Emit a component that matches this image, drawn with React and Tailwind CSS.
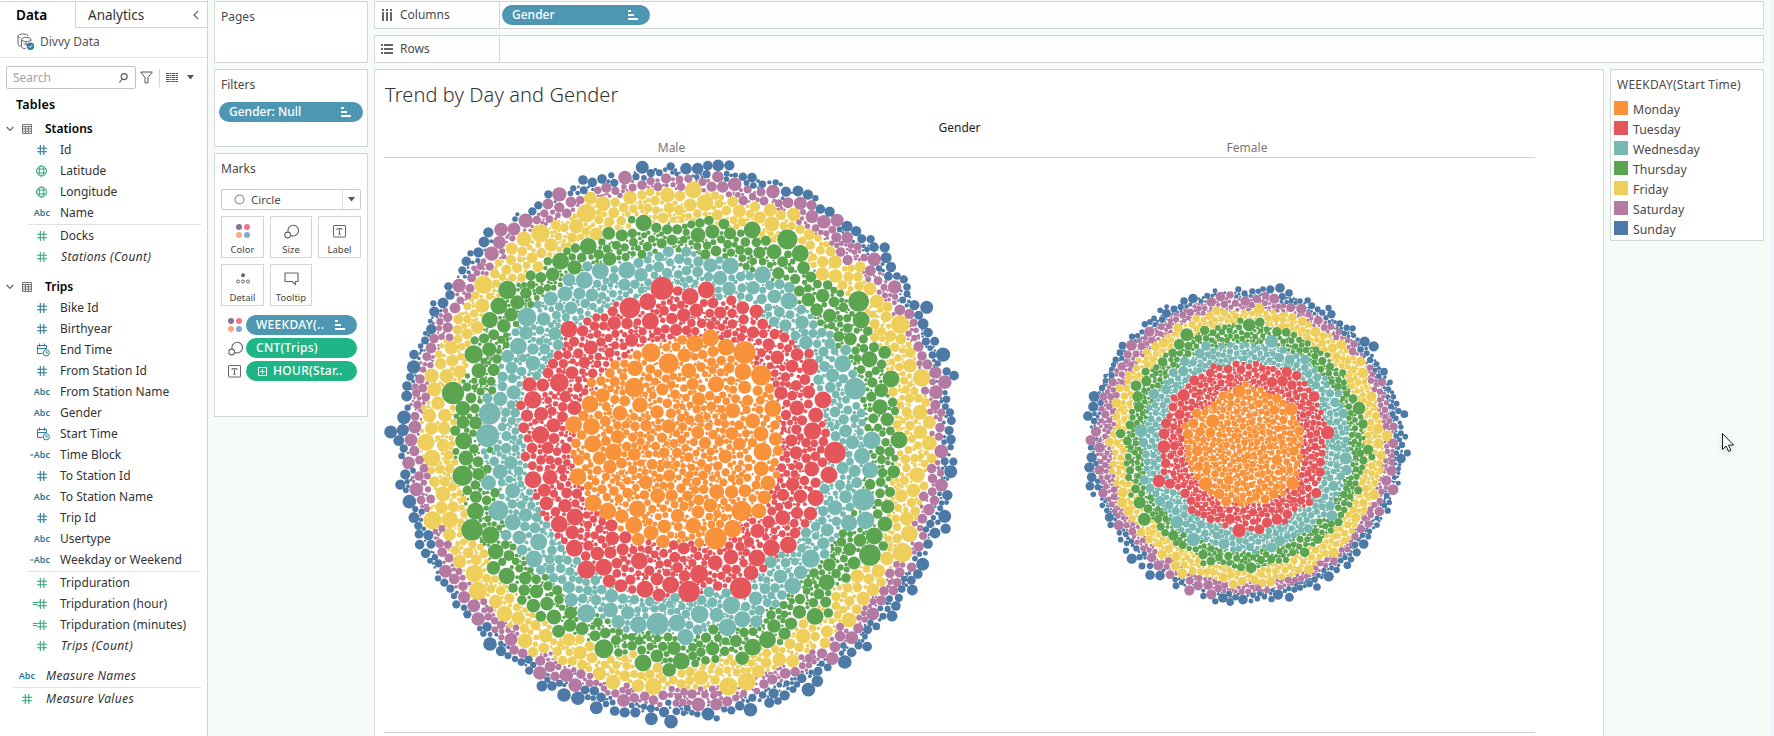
import React from "react";

const COLORS = {
  O: "#f8923b",
  R: "#e5565c",
  T: "#77b8b3",
  G: "#5ba551",
  Y: "#eecf5b",
  P: "#b47aa2",
  B: "#4c79a5",
};
const ORDER = ["O", "R", "T", "G", "Y", "P", "B"];

/* ---------- bubble data: "x y r" triples on a 3x grid, grouped by weekday ---------- */

const MALE_NW = {
  B: "787 52 19,872 49 12,918 56 16,955 56 16,609 90 14,637 97 14,666 87 14,694 76 9,580 115 9,505 133 12,475 166 12,457 184 12,412 193 6,405 207 8,325 247 15,312 276 16,295 307 15,272 310 9,259 334 14,247 361 12,205 409 12,210 435 14,189 459 16,160 460 9,163 485 15,151 514 7,154 538 15,148 572 11,122 588 8,102 614 14,101 651 20,81 708 14,80 738 16,107 700 13,83 773 9,72 803 20,34 847 19,68 840 18,812 70 12,838 68 10,890 72 7,703 100 12",
  P: "735 83 20,786 105 14,812 92 12,858 85 15,925 86 12,679 113 15,706 121 12,653 121 11,538 133 21,573 156 16,504 162 16,538 172 15,560 190 14,493 190 12,437 212 21,402 237 19,363 239 20,358 277 19,335 311 21,397 265 9,358 315 11,301 349 11,329 350 12,291 369 9,237 407 20,270 415 13,225 474 16,203 502 14,203 532 15,162 565 14,153 594 16,209 563 11,120 687 14,128 714 13,137 741 13,104 831 19,94 868 18",
  Y: "940 120 25,862 135 22,631 145 19,669 161 22,619 190 28,750 143 20,786 135 14,900 138 16,825 152 14,930 167 17,867 174 16,897 180 15,849 204 16,701 188 16,731 173 14,688 215 15,589 229 21,647 254 19,553 233 13,527 225 14,481 250 27,432 267 22,513 285 20,577 262 15,456 323 16,474 350 16,427 304 14,395 296 18,394 331 15,379 359 15,310 404 27,410 352 15,397 383 12,367 382 11,425 383 13,286 436 12,307 467 21,235 508 15,261 551 16,294 531 19,232 541 14,262 507 12,214 592 20,182 641 17,217 632 18,239 665 19,155 677 21,200 678 21,163 718 21,174 759 20,148 797 20,195 797 20,157 835 19,194 834 19,138 872 18,233 566 13,244 590 11",
  G: "791 219 24,686 250 19,726 256 18,626 289 25,588 294 14,756 251 14,829 233 15,862 238 15,954 255 22,891 238 15,876 270 16,911 269 11,687 326 20,656 312 15,542 334 25,583 352 21,518 373 20,605 323 14,802 290 14,760 276 13,734 292 12,737 321 12,786 313 13,845 280 15,382 420 27,357 468 25,412 457 21,438 429 17,453 377 15,481 382 16,453 405 13,480 421 13,328 511 24,394 494 20,372 527 20,341 554 16,408 522 9,284 571 12,312 565 15,281 613 27,328 598 21,297 663 22,341 660 18,351 627 14,219 729 33,273 744 16,249 777 22,308 756 14,261 711 13,283 692 9,333 694 13,336 722 12,308 692 12,254 818 19,287 818 19,226 838 15,250 872 24,284 776 14,544 265 0,755 209 11,815 267 11",
  T: "865 305 16,918 305 14,838 322 14,898 326 15,622 349 15,661 363 25,613 391 25,567 389 19,555 431 22,512 446 21,598 431 18,636 435 19,742 361 25,783 372 20,701 384 15,775 340 15,803 330 11,811 358 12,733 404 18,766 400 14,833 354 16,855 370 15,870 337 12,573 474 19,538 470 13,440 501 28,491 507 20,438 548 20,480 541 13,527 550 19,415 589 25,459 597 17,494 597 16,534 585 16,459 640 22,383 619 19,395 656 18,438 657 14,468 680 13,323 745 15,361 747 21,401 727 21,368 680 15,367 709 14,397 681 14,327 793 32,322 855 34,378 787 14,407 787 14,397 809 12,616 460 14,700 348 12,672 413 10,895 373 13,928 388 11",
  R: "845 415 34,930 440 25,803 454 25,751 474 31,811 514 25,893 423 14,910 498 19,877 505 17,945 482 18,890 540 18,917 541 14,565 538 25,608 543 17,698 484 15,650 502 12,622 514 12,672 503 12,702 521 20,742 516 17,645 528 14,670 527 13,582 575 15,634 592 21,665 575 14,684 564 12,700 552 12,755 571 19,690 606 15,703 589 12,705 621 13,535 616 14,561 614 13,519 641 15,504 669 16,576 668 19,538 698 28,613 637 17,638 670 14,449 703 21,488 705 19,458 749 26,583 775 21,556 740 17,534 735 14,484 792 21,441 797 18,421 769 14,522 825 21,515 784 13,552 774 14,431 833 16,482 856 25,594 712 14,546 800 16,788 544 12,772 470 0,655 620 11,595 690 10",
  O: "866 640 30,813 608 28,945 580 25,913 616 20,907 570 14,765 655 23,705 645 14,763 713 29,811 657 14,926 662 22,630 763 25,668 736 21,734 753 16,720 790 22,780 765 23,831 786 20,847 718 18,582 823 25,633 828 25,608 800 15,676 814 16,866 829 21,765 829 14,798 827 17,712 860 20,704 694 15,663 693 14,634 698 14,690 670 14,862 760 14,918 743 11,955 747 19,938 702 18,924 795 12,706 767 12,605 855 14,689 840 12,738 824 12,953 848 19,730 680 12",
};

const MALE_NE = {
  B: "18 56 17,53 56 17,84 47 14,114 47 17,148 46 15,140 71 8,216 83 14,268 97 6,287 97 9,302 103 6,318 125 15,354 123 16,382 136 15,406 145 9,421 177 14,447 185 15,502 230 16,526 243 15,545 266 13,572 268 12,582 291 14,614 292 15,618 323 16,633 351 15,597 355 9,651 378 11,671 388 12,625 379 13,681 411 11,681 432 10,740 472 19,703 466 15,715 496 13,729 521 16,744 548 14,764 574 13,788 614 21,761 615 11,800 664 12,822 677 14,796 770 10,810 788 12,814 811 13,817 853 10,732 590 11,668 450 10,794 830 8",
  P: "114 80 17,163 103 20,129 110 17,95 110 15,243 126 13,279 125 20,190 152 14,218 140 11,252 153 13,324 158 16,362 160 19,395 166 15,397 200 19,431 215 20,472 211 19,439 250 9,469 262 15,502 262 17,482 306 14,503 330 15,583 328 20,553 323 11,571 362 16,594 392 13,513 287 9,644 411 20,660 480 16,688 492 15,612 412 10,701 518 12,686 551 9,715 590 15,726 618 14,742 643 15,766 668 18,793 698 20,769 725 20,766 765 15,735 722 12,784 788 12,780 833 14,708 541 8,645 440 9,703 564 9,775 858 9",
  Y: "40 120 25,75 158 25,31 165 19,4 138 16,117 161 13,158 155 16,178 184 19,112 195 16,139 182 14,225 170 15,239 202 18,271 183 19,275 220 22,303 195 15,342 192 20,186 216 13,311 229 12,361 238 14,388 254 16,367 271 12,390 286 14,452 304 15,421 301 13,429 336 17,465 336 20,540 351 16,427 372 20,466 378 20,507 380 15,532 380 14,488 405 14,570 416 19,537 410 14,590 454 20,622 470 15,618 500 16,661 523 27,584 522 15,603 548 13,586 560 14,630 558 17,663 567 16,691 607 16,690 647 20,644 592 14,725 683 26,639 726 14,672 692 12,688 745 14,715 745 13,703 723 12,720 787 22,748 817 19,690 827 14,720 847 20,680 786 15,712 827 0,648 822 13,414 264 11,513 355 11,560 483 8,735 862 10",
  G: "54 255 22,97 244 21,132 222 16,34 223 12,60 219 14,87 213 14,150 250 18,217 241 25,238 307 18,282 305 22,322 268 30,361 310 25,196 276 14,229 275 14,257 272 15,108 303 16,76 313 15,371 354 19,308 335 16,295 370 18,345 387 15,333 359 10,394 380 16,412 402 13,358 423 16,428 437 20,443 405 14,386 450 20,462 456 16,536 454 31,481 430 11,409 478 19,449 497 20,490 472 14,544 511 25,511 567 19,476 559 16,563 542 14,531 540 9,568 628 24,614 607 19,582 590 15,527 603 12,605 643 14,532 624 12,633 687 25,543 659 13,604 721 20,577 697 15,567 674 11,638 757 14,600 771 23,623 809 20,645 783 12,574 740 15,657 870 25,594 833 12,631 843 13,248 335 11,180 300 14,143 283 13,518 584 9,153 308 12,270 345 9,550 750 9",
  T: "91 347 21,151 348 25,55 335 15,18 305 15,120 384 21,19 362 14,53 365 16,147 416 20,86 378 14,182 380 14,209 378 13,248 375 25,219 414 20,269 403 14,299 403 15,327 411 16,283 439 20,327 453 25,245 447 15,208 441 12,364 479 14,298 486 16,316 526 18,282 515 15,366 517 20,400 524 13,378 578 20,346 557 14,401 550 13,424 548 14,450 557 11,488 641 25,497 600 16,431 604 15,449 580 16,525 716 32,456 676 20,415 689 15,452 711 16,518 672 13,436 652 16,497 843 19,491 808 15,465 786 16,526 804 13,577 870 25,541 791 13,467 858 15,466 732 11,503 780 13,330 494 13,265 472 11,415 630 11,540 846 11,408 718 11",
  R: "79 420 25,30 440 25,10 495 20,49 481 20,99 459 16,154 451 15,188 473 19,229 484 20,121 488 18,156 490 14,191 508 15,157 522 14,219 547 18,248 523 16,190 538 12,250 550 13,284 552 15,313 562 15,266 583 18,292 622 20,324 595 12,351 614 19,387 611 14,245 608 13,336 648 19,391 650 25,316 681 14,303 729 20,374 689 16,386 726 19,290 706 13,349 706 16,429 750 25,351 774 22,407 795 22,385 762 13,318 795 15,366 811 15,349 838 15,397 844 26,437 849 13,334 863 13,125 563 8,20 530 14,45 545 12,65 520 14,92 530 13,268 650 10,275 690 13,320 760 11,4 465 12,125 532 11",
  O: "91 563 25,44 580 25,12 616 20,139 592 25,193 608 33,99 604 16,124 632 14,68 614 14,27 662 22,63 651 14,95 636 13,244 676 30,189 664 25,147 654 16,108 703 24,129 682 13,40 704 17,194 712 19,233 722 15,153 692 13,56 747 20,94 770 15,158 782 22,278 776 25,203 751 16,241 751 13,218 813 22,243 851 22,29 810 14,177 826 14,200 780 12,57 805 13,156 850 19,131 800 11,288 862 18,99 854 14,262 803 10,285 825 14,198 850 12,64 848 11,30 765 10,128 735 10,85 830 12,7 770 9,75 672 9,220 690 9",
};

const MALE_SW = {
  B: "55 14 16,71 40 12,76 118 15,61 149 15,88 200 20,102 248 16,118 295 13,119 329 14,137 355 14,150 377 8,144 300 15,153 328 13,159 315 10,175 385 12,174 430 9,193 443 12,211 461 12,222 483 9,229 508 12,252 518 9,262 538 12,302 580 8,310 596 9,320 576 14,330 627 20,363 648 15,384 662 10,405 672 9,426 680 11,448 706 12,444 673 12,458 690 9,486 753 16,516 753 14,552 780 20,594 789 20,538 745 10,502 734 9,615 765 13,643 768 14,649 818 19,663 787 14,678 807 9,704 828 14,734 832 15,766 832 15,813 822 12,814 850 19,873 860 20,852 831 15,889 829 11,865 803 9,115 275 12,130 262 9,125 230 9,98 105 8,345 650 8,792 815 9,620 745 9",
  P: "93 15 19,103 48 15,86 84 19,119 75 13,132 100 13,117 123 14,109 163 20,123 195 13,142 123 10,144 163 9,152 192 13,180 328 13,186 350 14,187 280 10,207 369 13,197 409 19,222 431 16,203 327 12,237 408 10,249 454 14,254 485 18,282 510 19,295 552 20,311 500 10,323 546 11,363 570 12,345 584 10,393 613 19,364 607 9,402 645 14,429 656 14,408 578 9,480 714 20,481 677 15,510 695 16,512 656 6,559 721 20,526 724 14,585 750 20,603 716 14,630 723 9,630 745 11,646 742 9,673 762 9,682 772 8,706 775 12,731 796 19,762 789 14,794 784 14,820 796 14,850 781 14,740 752 9,875 762 9,888 805 10,715 755 8,870 780 8",
  Y: "138 22 25,190 31 19,156 70 25,219 25 9,207 60 14,180 102 14,211 102 14,225 82 10,164 140 16,194 140 15,217 155 13,189 177 22,185 217 19,219 216 16,158 256 27,209 255 25,250 193 10,257 220 12,208 298 19,226 346 14,267 350 16,239 380 20,291 376 16,284 416 26,292 467 27,275 325 12,251 320 10,320 388 14,310 358 13,320 430 13,362 467 14,347 500 20,345 432 11,388 490 15,386 466 13,375 537 23,413 549 20,410 517 11,433 580 14,435 617 22,497 602 20,459 651 15,491 639 16,468 568 15,460 540 9,567 614 19,600 654 20,599 613 14,532 649 14,548 677 14,636 668 16,577 678 14,606 690 15,659 715 20,629 634 15,699 741 22,734 722 16,774 752 19,820 754 25,709 690 12,740 692 12,673 692 12,690 672 11,759 658 12,835 698 15,810 719 14,882 735 13,784 722 11,520 620 10,303 340 10,735 672 11,862 722 9,856 685 9",
  G: "250 17 25,258 69 22,247 122 30,282 42 14,294 80 16,330 45 9,227 50 10,296 117 18,263 167 14,286 150 14,320 103 13,287 187 18,286 229 25,320 196 14,344 172 14,276 285 32,332 300 26,292 263 11,325 250 10,345 350 23,386 363 16,341 398 20,380 423 24,367 380 12,399 336 10,376 326 13,357 329 10,406 378 11,418 400 12,436 431 19,399 459 14,434 464 17,468 469 20,468 433 14,426 494 14,460 512 20,501 506 20,498 427 10,504 453 14,532 466 15,537 493 14,480 546 16,522 546 22,546 518 9,572 532 19,571 570 19,537 588 19,604 580 19,645 602 16,676 594 16,654 562 14,672 642 28,709 612 15,692 570 15,757 631 14,715 588 11,789 684 25,831 662 19,867 705 20,882 640 20,849 636 14,776 618 13,785 645 13,811 635 11,864 606 13,896 680 15,735 605 9,737 632 8,833 606 11,885 595 9,310 320 9,485 488 9",
  T: "320 0 34,379 40 16,343 80 14,329 90 14,360 110 22,393 84 20,415 107 14,405 40 12,326 144 22,398 167 22,365 143 11,432 68 11,388 133 11,355 227 30,397 207 14,398 262 24,437 240 20,424 210 13,418 307 20,378 302 16,438 275 14,476 321 25,462 278 16,469 247 14,454 212 12,426 345 16,462 372 25,482 404 14,516 346 14,509 373 14,543 340 11,500 270 11,522 429 14,510 402 14,542 400 14,537 374 13,567 458 18,573 494 20,545 435 13,570 410 13,562 376 13,608 491 14,598 463 11,622 463 14,619 535 27,598 433 11,593 380 12,648 495 16,665 464 14,695 483 20,692 525 22,645 435 14,617 440 11,716 560 20,741 535 20,777 569 25,834 567 33,888 566 25,809 500 14,763 494 14,728 491 15,739 583 10,773 524 10,795 524 9,848 517 13,885 489 14,868 507 11,825 521 11,492 298 10,432 100 9,668 440 10,853 540 9,873 530 10,890 528 9,580 435 10,380 112 9",
  R: "482 0 26,456 39 16,436 65 14,459 134 25,483 75 14,457 92 13,503 38 18,520 10 16,510 127 22,510 75 13,493 166 19,558 40 16,546 103 14,550 128 11,560 84 11,499 205 20,556 212 20,561 174 16,590 176 15,527 230 14,585 246 25,538 268 25,577 292 20,582 206 12,620 240 11,533 302 9,624 270 12,553 317 10,583 340 25,625 332 15,624 300 9,648 298 12,652 355 20,691 353 18,617 365 14,697 310 20,694 270 18,736 307 18,728 343 18,657 282 12,665 265 11,662 312 12,620 405 27,670 398 25,711 384 16,689 437 19,721 451 19,735 400 11,778 378 25,751 434 15,760 345 12,795 463 25,831 432 19,837 480 19,872 450 25,808 407 15,840 388 12,851 355 13,862 384 12,885 367 16,880 330 14,895 400 16,785 325 9,805 345 12,860 413 11,600 160 8,605 192 8,640 370 9,730 372 9,775 415 9,897 470 15",
  O: "638 27 25,588 25 14,700 53 25,595 75 16,659 69 20,690 94 20,740 35 14,763 58 19,594 125 25,652 106 13,678 125 12,724 84 16,625 153 13,666 163 14,702 168 14,816 88 16,852 53 16,868 122 18,797 142 20,833 182 22,640 205 25,685 230 25,743 174 16,772 222 25,724 244 20,760 270 25,813 293 22,737 208 9,853 274 20,850 320 20,774 311 19,808 260 10,793 180 14,826 154 15,712 8 18,758 105 14,783 84 11,875 181 18,846 8 15,742 137 12,893 242 20,817 222 12,665 42 0,782 20 12,812 10 11,890 88 10,795 112 10,712 128 10,647 140 11,835 245 10,872 300 10,615 100 10,726 60 10,850 220 11",
};

const MALE_SE = {
  B: "813 14 14,812 35 9,820 80 12,812 110 19,779 75 13,802 181 15,794 244 19,797 281 15,765 294 16,750 268 12,744 327 14,738 281 9,728 388 19,712 418 14,736 355 7,693 434 13,697 465 16,673 428 9,656 490 12,648 512 14,625 492 10,636 543 16,623 522 9,571 565 9,560 583 13,569 595 9,561 635 14,536 631 12,515 652 14,494 681 20,463 685 9,444 696 11,414 709 13,425 686 9,411 739 17,386 763 20,352 747 9,363 730 14,314 781 15,281 775 15,294 798 11,268 803 15,248 780 11,211 824 20,180 813 14,154 826 12,133 823 9,84 837 19,110 850 9,36 833 8,340 762 10,320 745 9,52 838 9,22 820 10,555 605 8,800 200 7",
  P: "784 49 20,777 5 12,755 101 14,784 150 19,758 131 14,731 184 14,757 171 13,763 196 14,747 224 17,715 242 9,716 335 15,705 310 10,722 280 9,695 397 14,640 467 14,610 468 14,634 415 14,656 414 15,605 495 15,578 537 19,581 500 10,536 582 15,514 607 19,483 604 16,465 635 16,457 671 19,481 575 12,426 655 15,407 650 14,386 670 12,367 692 10,345 711 14,317 715 16,302 700 12,277 733 15,252 747 14,228 750 10,142 799 15,167 789 10,109 808 18,55 808 20,36 777 14,75 779 11,97 762 10,102 782 10,191 775 10,207 769 8,387 690 9,12 770 11,62 762 8,740 205 9,118 775 8",
  Y: "748 24 22,755 70 15,720 15 14,698 10 12,711 120 23,735 65 13,704 70 13,676 73 14,694 98 12,732 153 13,664 182 19,700 166 20,695 204 14,705 228 14,680 251 20,688 296 25,655 243 14,651 276 12,652 310 14,667 353 29,620 370 20,625 312 11,595 408 20,566 432 16,603 443 14,580 464 19,532 424 20,550 490 20,530 523 15,508 498 15,532 458 14,502 460 14,507 555 22,470 484 14,468 513 13,473 540 12,441 589 18,435 624 16,369 605 22,405 605 14,370 567 14,330 626 16,358 634 14,338 679 19,298 674 20,400 634 9,258 683 16,235 709 19,200 740 27,145 754 27,170 712 12,105 735 14,62 728 22,30 710 14,28 737 13,117 710 13,142 705 11,212 683 11,285 640 12,260 655 13,5 745 14,140 680 9,5 712 12,425 565 9,398 575 11,650 42 10,660 55 9,150 668 9,305 645 9,490 478 10",
  G: "657 17 25,625 50 15,604 69 13,600 45 14,641 110 19,603 113 14,643 68 10,570 148 16,602 141 14,630 171 15,623 215 20,593 237 14,600 175 14,615 267 22,583 303 25,570 360 32,610 333 14,540 316 19,508 342 19,487 318 14,522 384 19,448 389 19,440 442 24,498 429 14,469 415 14,417 477 16,384 444 14,437 501 16,405 545 25,445 534 14,400 503 14,358 531 20,360 492 15,402 414 14,282 573 20,333 566 18,314 596 18,263 615 25,218 637 25,187 670 20,168 618 18,273 540 14,98 641 20,5 678 25,134 649 14,61 652 14,78 608 15,114 609 12,100 583 15,148 628 9,34 657 13,193 592 14,218 590 13,34 635 13,483 350 0,455 370 10,475 345 10,335 500 9,480 400 9,490 297 12,265 562 9,313 538 11,300 621 9,331 515 9,55 628 10,380 467 11,510 295 9",
  T: "577 18 26,517 22 20,546 63 24,572 106 24,488 99 18,524 108 18,467 8 13,550 194 33,557 256 26,497 185 19,530 143 16,480 150 15,465 218 22,434 162 15,505 265 24,510 216 13,442 285 19,500 0 11,430 325 18,392 371 27,407 275 14,474 260 14,378 293 15,508 157 11,434 357 14,407 303 11,362 412 20,338 453 25,365 340 13,345 380 11,272 381 18,301 424 20,255 461 16,285 459 14,227 490 20,306 480 14,270 415 9,322 415 9,154 511 26,110 540 21,187 553 24,142 577 26,197 515 14,239 526 15,229 559 18,59 538 26,17 607 24,87 471 16,97 502 15,139 474 14,53 584 15,65 495 14,40 514 12,262 503 13,287 506 12,225 455 9,100 570 0,305 360 10,410 330 10,418 190 13,385 318 10,260 435 10,18 495 12,457 120 10,85 575 13,125 505 12",
  R: "465 53 32,447 120 25,334 16 18,348 53 19,380 20 14,395 102 22,408 66 14,407 189 24,407 143 15,338 148 20,373 137 14,391 236 20,361 184 20,309 180 18,425 80 14,380 70 14,430 20 14,351 234 18,308 248 22,266 261 19,336 185 12,345 294 16,325 330 25,307 296 10,274 339 25,233 288 21,282 287 10,231 369 25,213 413 22,207 321 15,182 459 32,153 366 22,105 383 22,178 303 12,57 417 27,27 470 32,167 404 14,113 453 14,10 340 18,140 404 14,8 372 10,53 362 13,145 434 9,180 335 14,83 368 9,276 228 13,297 217 12,305 98 13,335 95 10,307 70 8,88 437 10,218 258 10,12 420 17,126 420 12,120 350 9,300 135 9,290 205 0,255 305 10,240 330 9,325 210 12,400 5 15,320 115 10,42 345 10",
  O: "248 50 27,287 12 20,294 47 15,136 64 20,178 27 19,244 101 22,206 97 11,75 24 18,185 228 30,264 144 22,236 228 22,253 187 20,195 167 19,155 171 20,110 170 22,107 310 33,158 281 26,40 272 23,91 211 20,54 231 19,58 323 14,71 163 14,69 121 14,113 93 14,95 271 11,138 260 10,57 195 16,23 183 16,10 240 18,228 150 13,26 67 14,130 142 12,118 20 14,175 100 11,205 70 11,218 190 12,88 245 11,112 237 12,42 20 12,92 50 12,137 112 12,35 98 11,155 130 11,202 128 12,3 160 14,180 60 10,245 10 16,97 130 10,132 200 11,5 300 12,48 55 10,8 110 10,160 200 8,290 120 11",
};

const FEMALE = {
  B: "630 54 14,601 58 12,657 69 11,505 58 9,579 57 8,547 64 9,435 62 7,470 68 8,369 86 14,342 93 11,312 117 10,289 130 13,271 121 8,250 147 8,240 155 8,290 110 7,226 162 9,186 200 9,158 227 11,150 248 10,137 269 9,125 318 9,106 318 6,73 380 16,70 409 15,54 438 14,72 453 9,82 472 8,72 432 7,65 562 15,58 592 15,65 622 14,60 648 13,70 673 8,97 706 8,118 742 13,122 765 9,152 809 8,148 787 8,170 820 8,186 866 15,168 842 9,207 862 9,216 888 10,240 915 14,240 888 9,270 917 14,318 947 10,400 978 9,436 994 9,459 984 14,480 996 11,519 989 14,497 982 9,543 993 7,562 986 8,605 987 9,624 974 15,658 982 13,583 980 8,741 951 11,776 919 15,800 900 9,832 886 11,843 868 9,860 847 12,881 822 14,895 800 8,921 765 8,921 745 7,953 722 9,985 640 7,984 597 7,993 566 14,1012 549 10,996 525 9,1006 500 8,986 512 9,980 401 8,1002 432 11,987 424 9,966 367 6,960 337 8,942 305 11,930 298 8,920 282 8,911 229 15,884 215 15,848 175 9,830 173 9,784 132 12,776 115 9,713 91 9,725 107 10,757 128 9,690 93 8,636 80 10,808 175 8,978 445 8,953 380 7",
  P: "451 80 14,480 75 11,424 96 14,587 77 11,613 86 15,561 87 12,527 94 14,463 103 11,496 100 10,662 113 13,694 116 15,585 100 8,544 104 9,361 127 11,338 136 10,387 115 8,318 148 9,238 185 15,184 226 16,214 229 11,297 168 9,274 170 10,173 254 12,198 252 10,155 289 12,128 335 12,155 313 9,183 283 9,99 380 12,106 433 12,120 408 10,78 485 15,62 510 15,89 533 15,110 506 9,88 600 14,112 622 9,104 563 8,99 669 14,132 680 10,108 650 8,146 766 15,170 766 9,187 785 11,245 863 14,265 886 15,300 914 13,359 932 12,358 961 15,384 947 14,414 945 14,424 973 15,445 955 12,465 947 9,290 890 9,220 835 9,515 965 9,535 965 9,565 955 9,655 930 10,675 930 9,792 873 11,750 880 9,832 838 9,855 800 11,873 777 12,895 762 11,884 745 9,903 735 9,928 725 14,905 690 10,969 659 16,949 632 15,965 602 15,970 520 14,971 470 12,945 495 0,936 336 12,930 365 9,920 335 9,900 293 9,932 405 8,848 245 11,852 222 11,806 186 9,745 151 13,780 170 10,765 172 10,716 133 9,833 212 8,930 570 9,935 665 9,946 440 8,715 905 9,335 905 8",
  Y: "567 116 16,440 122 13,418 138 12,463 128 11,497 138 10,378 146 11,402 148 9,667 142 12,697 154 14,660 155 9,637 150 10,617 145 12,598 145 10,588 168 0,547 130 8,324 174 14,350 175 10,281 218 15,302 210 9,257 230 13,230 246 11,206 271 8,258 250 9,232 285 10,200 295 10,175 315 10,174 333 10,150 355 11,168 355 10,138 400 14,163 378 11,152 415 8,139 440 12,146 470 9,130 492 9,119 516 13,138 518 10,136 548 9,152 563 9,130 583 10,125 603 9,147 608 8,139 640 10,143 627 8,158 670 15,157 696 15,175 722 15,186 745 11,205 752 10,213 787 13,238 808 12,218 765 10,247 788 9,278 852 14,268 822 10,294 838 12,318 862 14,316 886 14,343 885 10,337 910 15,368 903 12,393 905 10,410 905 10,430 908 9,460 922 14,490 943 13,516 934 13,483 915 10,554 930 13,580 938 12,601 935 14,547 912 9,575 915 9,635 920 10,645 900 10,660 890 8,686 900 11,716 898 15,700 875 9,725 862 10,737 840 11,790 848 15,768 850 10,797 798 10,798 823 9,823 812 10,824 790 10,833 765 10,857 743 14,835 735 9,850 720 11,857 697 9,880 698 12,912 674 15,887 655 11,878 635 9,914 640 10,905 610 9,890 605 9,934 556 14,905 587 10,926 520 15,951 497 16,924 476 16,902 457 10,918 438 12,904 380 15,897 400 9,872 275 14,879 309 16,865 337 9,850 300 10,840 330 10,835 272 10,812 225 15,788 234 14,800 258 11,815 262 10,833 247 10,738 187 15,757 200 11,720 185 11,713 203 9,758 218 11,768 235 9,637 168 9,840 275 0,865 722 7,775 215 7,815 288 8,845 350 9,850 262 8,888 350 7,740 208 8",
  G: "538 165 19,569 157 14,404 181 14,350 194 19,429 188 10,456 186 9,479 182 9,511 152 9,507 172 9,328 223 16,355 228 12,385 205 11,308 249 13,295 258 9,278 276 14,330 250 9,259 292 9,227 304 12,229 333 15,248 330 9,198 347 16,203 380 16,191 402 9,207 410 15,190 418 10,218 430 8,180 465 13,209 475 9,151 490 14,172 513 13,188 495 8,198 520 9,175 560 10,195 548 9,205 560 9,170 580 9,180 602 12,205 595 9,176 621 10,198 633 8,198 658 13,212 670 10,209 697 18,183 675 8,234 716 13,223 748 19,264 747 12,248 732 8,272 770 12,285 788 11,310 797 15,340 793 9,318 818 9,338 825 12,333 810 10,377 838 9,399 854 14,423 873 13,400 880 9,447 862 11,475 858 12,470 830 9,500 865 10,513 892 12,543 893 16,550 860 9,573 870 12,603 867 12,590 855 9,627 872 9,648 870 9,650 860 8,668 848 10,704 847 14,688 830 9,690 808 10,712 808 9,743 807 14,735 785 10,767 768 9,748 755 9,783 760 10,805 756 12,800 738 8,823 720 9,824 700 9,838 705 8,840 680 9,822 672 11,828 657 9,840 640 9,865 661 12,855 640 9,860 620 9,858 598 9,880 570 12,875 550 11,905 560 10,893 540 15,867 523 8,865 497 9,879 462 14,855 450 8,867 415 19,849 386 13,830 372 10,840 342 10,805 350 10,805 330 9,818 308 10,780 290 12,777 310 9,757 273 12,738 240 10,735 258 10,772 255 8,708 240 9,713 220 9,648 186 13,620 187 14,590 178 9,672 195 9,695 225 8,555 200 8,500 200 8,425 210 8,785 335 9,855 475 9",
  T: "605 213 19,628 263 14,659 269 15,705 270 14,640 240 11,408 228 14,389 250 15,430 243 9,455 228 9,480 225 9,345 276 14,340 303 15,367 278 11,310 308 13,288 359 14,252 372 16,318 345 9,240 340 0,255 405 9,238 413 9,257 428 9,243 447 10,257 463 9,215 482 19,240 480 11,220 518 14,246 512 9,228 553 11,250 555 9,232 575 10,252 580 9,223 630 14,240 654 13,245 633 9,270 693 15,258 672 10,297 705 13,322 757 19,300 690 9,317 723 12,343 735 10,370 808 20,348 762 10,365 770 11,393 763 12,335 780 8,405 790 11,440 797 11,462 822 16,437 818 9,490 800 9,509 812 10,540 832 12,526 815 9,552 847 8,565 815 9,605 832 15,630 812 16,590 800 9,650 800 10,665 775 9,693 780 9,715 776 13,710 750 9,738 755 8,740 725 9,757 710 10,786 738 16,780 708 14,765 680 10,790 648 15,770 660 9,805 625 10,830 600 15,812 620 12,827 565 18,800 560 9,805 535 10,832 540 8,828 510 10,800 500 9,830 475 9,820 431 14,800 455 10,780 430 9,795 397 14,805 370 11,780 370 12,755 358 9,770 345 9,765 325 8,742 322 12,737 345 12,715 312 11,705 292 11,720 335 9,590 230 9,680 285 9,570 250 8,530 225 8,500 250 8,460 255 8,785 470 9,800 587 9,795 480 8,700 300 0,360 750 8,275 380 8",
  R: "498 282 10,513 299 13,474 297 13,430 289 9,421 309 13,558 282 9,537 290 9,536 312 9,577 295 10,609 297 9,650 306 15,680 317 14,605 335 16,636 333 16,585 325 12,480 323 12,449 318 9,453 338 10,373 331 15,395 320 9,420 330 9,391 345 9,666 345 14,706 340 9,690 358 9,732 380 16,703 378 10,719 398 9,341 376 18,312 383 10,333 400 9,309 411 13,329 433 15,345 415 9,289 460 15,282 491 16,298 440 9,310 470 10,282 530 19,312 528 13,337 505 9,310 500 9,287 580 14,302 558 10,282 605 10,267 633 19,300 641 15,310 610 9,323 590 8,332 620 9,325 650 9,345 670 14,363 692 13,365 720 12,340 645 9,382 705 9,383 730 9,402 735 10,395 715 9,422 747 12,430 725 9,450 720 10,444 748 9,455 735 9,480 747 15,507 782 20,467 765 9,478 720 10,502 745 9,525 762 9,549 755 9,568 778 15,591 758 15,549 727 12,575 732 9,520 722 9,621 748 16,605 720 9,652 733 14,640 720 9,627 705 9,645 755 9,672 690 9,693 692 12,718 697 11,710 710 9,675 660 9,690 645 9,715 655 10,739 669 15,725 625 9,735 640 9,750 606 14,735 590 10,714 610 10,695 615 9,751 577 13,724 560 9,705 580 9,757 550 10,735 530 11,700 545 9,773 488 20,740 490 10,720 495 10,755 515 9,710 465 9,730 458 9,745 440 9,752 428 8,700 435 9,715 430 9,692 410 9,725 415 9,560 315 8,480 340 8",
  O: "507 364 19,527 343 9,486 343 8,458 378 12,481 380 11,482 400 10,535 365 9,551 358 8,428 453 20,380 430 14,405 427 10,432 405 9,370 460 15,345 468 11,353 493 15,390 485 14,421 488 15,425 435 0,382 543 16,355 533 9,408 545 8,428 525 9,420 540 9,375 565 9,386 590 14,407 642 20,410 603 12,383 620 10,435 612 11,437 585 9,447 672 16,425 665 9,468 693 15,484 675 9,476 630 14,450 635 9,500 660 9,520 640 9,541 690 10,557 680 12,585 687 13,610 688 10,565 660 9,611 672 14,640 670 9,620 650 10,668 640 19,640 625 9,621 570 16,650 575 10,660 600 10,680 610 8,672 543 14,643 545 9,688 483 14,660 490 9,672 510 9,630 500 9,663 418 19,640 425 9,613 420 14,620 385 14,600 380 8,583 393 9,568 400 12,540 385 9,640 450 12,610 455 9,590 430 9,575 425 9,640 400 10,520 400 9,545 410 9,500 425 9,460 420 9,450 480 0,455 440 9,680 460 9,682 580 9,595 605 8,570 635 9,545 645 9,510 700 8,500 690 10,360 510 8,400 510 9,365 485 0,455 560 9,480 585 8,600 530 9,430 640 9",
};

/* Outer radius of every weekday band at E, SE, S, SW, W, NW, N, NE. */
const MALE_BANDS = [
  [106, 107, 99, 102, 100, 92, 104, 114],
  [154, 155, 154, 149, 147, 150, 150, 156],
  [195, 186, 191, 185, 190, 195, 191, 188],
  [222, 217, 223, 217, 218, 222, 220, 225],
  [259, 249, 246, 245, 253, 251, 253, 253],
  [271, 264, 263, 260, 265, 265, 266, 270],
  [279, 274, 271, 267, 273, 272, 275, 279],
];
const FEMALE_BANDS = [
  [170, 185, 180, 178, 180, 158, 175, 168],
  [240, 257, 255, 243, 250, 248, 243, 256],
  [312, 322, 320, 312, 307, 303, 303, 308],
  [358, 366, 370, 357, 355, 358, 362, 358],
  [415, 420, 417, 408, 397, 402, 402, 415],
  [450, 440, 447, 440, 445, 444, 440, 440],
  [472, 462, 466, 456, 466, 460, 460, 462],
].map((b) => b.map((r) => r / 3));

function rng(seed) {
  let s = seed;
  return () => {
    s = (s + 0x6d2b79f5) | 0;
    let t = Math.imul(s ^ (s >>> 15), 1 | s);
    t = (t + Math.imul(t ^ (t >>> 7), 61 | t)) ^ t;
    return ((t ^ (t >>> 14)) >>> 0) / 4294967296;
  };
}

/* Nudges overlapping bubbles apart; the larger one of a pair moves less. */
function relax(list) {
  list.sort((a, b) => a.x - b.x);
  for (let pass = 0; pass < 14; pass++) {
    for (let i = 0; i < list.length; i++) {
      const a = list[i];
      for (let j = i + 1; j < list.length; j++) {
        const b = list[j];
        const dx = b.x - a.x;
        if (dx > 26) break;
        const dy = b.y - a.y;
        const d = Math.hypot(dx, dy) || 0.01;
        const over = a.r + b.r - d;
        if (over <= 0) continue;
        const wa = (b.r * b.r) / (a.r * a.r + b.r * b.r);
        a.x -= (dx / d) * over * wa;
        a.y -= (dy / d) * over * wa;
        b.x += (dx / d) * over * (1 - wa);
        b.y += (dy / d) * over * (1 - wa);
      }
    }
  }
}

/* Places the listed bubbles, then packs progressively smaller ones between them. */
function pack({ groups, bands, cx, cy, scale, seed }) {
  const rand = rng(seed);
  const CELL = 12;
  const grid = new Map();
  const out = [];
  const gapAt = (x, y) => {
    let g = 99;
    const gx = Math.floor(x / CELL);
    const gy = Math.floor(y / CELL);
    for (let i = -2; i <= 2; i++)
      for (let j = -2; j <= 2; j++) {
        const cell = grid.get((gx + i) * 4096 + gy + j);
        if (cell)
          for (const c of cell) {
            const d = Math.hypot(c.x - x, c.y - y) - c.r;
            if (d < g) g = d;
          }
      }
    return g;
  };
  const add = (x, y, r, k) => {
    const c = { x, y, r, k };
    const key = Math.floor(x / CELL) * 4096 + Math.floor(y / CELL);
    if (!grid.has(key)) grid.set(key, []);
    grid.get(key).push(c);
    out.push(c);
  };

  const listed = [];
  for (const { ox, oy, data } of groups)
    for (const k of Object.keys(data))
      for (const item of data[k].split(",")) {
        const [x, y, r] = item.split(" ").map(Number);
        if (r > 0) listed.push({ x: ox + x / 3, y: oy + y / 3, r: r / 3, k });
      }
  listed.sort((a, b) => b.r - a.r);
  const kept = [];
  for (const c of listed) {
    if (kept.every((o) => Math.hypot(o.x - c.x, o.y - c.y) - o.r > c.r * 0.5)) kept.push(c);
  }
  relax(kept);
  kept.sort((a, b) => b.r - a.r);
  for (const c of kept) {
    const g = gapAt(c.x, c.y);
    if (g > c.r * 0.6) add(c.x, c.y, Math.min(c.r, g), c.k);
  }

  const bandAt = (x, y) => {
    const a = (Math.atan2(y - cy, x - cx) / (Math.PI / 4) + 8) % 8;
    const i = Math.floor(a) % 8;
    const f = a - Math.floor(a);
    const d = Math.hypot(x - cx, y - cy);
    let inner = 0;
    for (let n = 0; n < 7; n++) {
      const b = bands[n][i] * (1 - f) + bands[n][(i + 1) % 8] * f;
      if (d <= b) return [n, (d - inner) / (b - inner)];
      inner = b;
    }
    return null;
  };

  const R = Math.max(...bands[6]) + 2;
  const passes = [
    [5, 3.6, 30000],
    [3.6, 2.5, 50000],
    [2.5, 1.6, 60000],
    [1.6, 1, 50000],
  ];
  for (const [hi, lo, tries] of passes) {
    for (let n = 0; n < tries; n++) {
      const x = cx + (rand() * 2 - 1) * R;
      const y = cy + (rand() * 2 - 1) * R;
      const q = rand();
      const hit = bandAt(x, y);
      if (!hit) continue;
      const g = gapAt(x, y);
      if (g < lo * scale) continue;
      const [band, t] = hit;
      if (hi > 4 && t < 0.22 && band > 0) continue;
      if (hi < 2 && t > 0.5 && q > 0.4) continue;
      add(x, y, Math.min(g, (lo + (hi - lo) * q) * scale), ORDER[band]);
    }
  }
  return out;
}

const MALE = pack({
  groups: [
    { ox: 380, oy: 150, data: MALE_NW },
    { ox: 680, oy: 150, data: MALE_NE },
    { ox: 380, oy: 435, data: MALE_SW },
    { ox: 680, oy: 435, data: MALE_SE },
  ],
  bands: MALE_BANDS,
  cx: 673,
  cy: 443,
  scale: 1,
  seed: 7,
});
const FEMALES = pack({
  groups: [{ ox: 1070, oy: 270, data: FEMALE }],
  bands: FEMALE_BANDS,
  cx: 1245,
  cy: 444,
  scale: 0.66,
  seed: 21,
});

function Bubbles() {
  return (
    <svg width="1151" height="574" viewBox="384 158 1151 574" className="block">
      {[...MALE, ...FEMALES].map((c, i) => (
        <circle
          key={i}
          cx={c.x.toFixed(2)}
          cy={c.y.toFixed(2)}
          r={(c.r + 0.15).toFixed(2)}
          fill={COLORS[c.k]}
        />
      ))}
    </svg>
  );
}

/* ---------- icons ---------- */

const Hash = () => (
  <svg width="10" height="10" viewBox="0 0 10 10" fill="none" stroke="currentColor" strokeWidth="1.1">
    <path d="M3.3 0v10M6.8 0v10M0 3.2h10M0 6.8h10" />
  </svg>
);
const Globe = () => (
  <svg width="11" height="12" viewBox="0 0 11 12" fill="none" stroke="currentColor" strokeWidth="1">
    <circle cx="5.5" cy="6" r="5" />
    <ellipse cx="5.5" cy="6" rx="2.3" ry="5" />
    <path d="M1 4h9M1 8h9" />
  </svg>
);
const Calendar = () => (
  <svg width="13" height="14" viewBox="0 0 13 14" fill="none" stroke="currentColor" strokeWidth="1">
    <path d="M5.5 10.5H.5v-8h9v3M.5 5.5h9M2.5 .5v3M7.5 .5v3" />
    <circle cx="9.3" cy="9.8" r="3.1" />
    <path d="M9.2 8v2h1.6" />
  </svg>
);
const TableIcon = () => (
  <svg width="10" height="10" viewBox="0 0 10 10" fill="none" stroke="#777" strokeWidth="1">
    <path d="M.5 .5h9v9h-9zM.5 2.5h9M.5 4.8h9M.5 7.2h9M3.5 2.5v7M6.5 2.5v7" />
  </svg>
);
const Chevron = () => (
  <svg width="8" height="6" viewBox="0 0 8 6" fill="none" stroke="#666" strokeWidth="1.2">
    <path d="M.7 1l3.3 3.4L7.3 1" />
  </svg>
);
const SortIcon = () => (
  <svg width="10" height="10" viewBox="0 0 10 10" fill="white" shapeRendering="crispEdges">
    <path d="M0 0h3v2H0zM0 4h6v2H0zM0 8h10v2H0z" />
  </svg>
);
const ColorDots = () => (
  <svg width="14" height="14" viewBox="0 0 14 14">
    <circle cx="3" cy="3" r="3" fill="#8a7197" />
    <circle cx="11" cy="3" r="3" fill="#f77389" />
    <circle cx="3" cy="11" r="3" fill="#f7ab80" />
    <circle cx="11" cy="11" r="3" fill="#84a8cf" />
  </svg>
);
const SizeIcon = () => (
  <svg width="15" height="15" viewBox="0 0 15 15" fill="none" stroke="#666" strokeWidth="1.1">
    <path d="M4.2 8.2A5.3 5.3 0 1 1 7 11.4" />
    <circle cx="3.7" cy="11" r="2.9" />
  </svg>
);
const LabelIcon = () => (
  <svg width="13" height="13" viewBox="0 0 13 13" fill="none" stroke="#666" strokeWidth="1">
    <rect x=".5" y=".5" width="12" height="11.5" rx=".5" />
    <path d="M4 5V3.7h5V5M6.5 3.7v5.4M5.2 9.2h2.6" />
  </svg>
);
const DetailIcon = () => (
  <svg width="14" height="12" viewBox="0 0 14 12" fill="none" stroke="#666" strokeWidth="1">
    <circle cx="7" cy="2.2" r="2" fill="#666" stroke="none" />
    <circle cx="2" cy="8.5" r="1.5" />
    <circle cx="7" cy="8.5" r="1.5" />
    <circle cx="12" cy="8.5" r="1.5" />
  </svg>
);
const TooltipIcon = () => (
  <svg width="15" height="14" viewBox="0 0 15 14" fill="none" stroke="#666" strokeWidth="1.1">
    <path d="M1 1h13v8.5h-2.5v3.2L8.3 9.5H1z" strokeLinejoin="round" />
  </svg>
);
const Caret = () => (
  <svg width="7" height="5" viewBox="0 0 7 5">
    <path d="M0 0h7L3.5 4.5z" fill="#555" />
  </svg>
);

/* ---------- sidebar ---------- */

function Field({ icon, name, calc, measure, italic, root }) {
  const abc = icon === "abc";
  const wide = abc || icon === "cal";
  return (
    <div className="flex h-[21px] items-center">
      <div
        className={`flex shrink-0 items-center justify-end ${root ? "w-[45px]" : "w-[60px]"} ${
          wide ? "pr-[10px]" : "pr-[13px]"
        } ${measure ? "text-[#37a478]" : "text-[#2c7896]"}`}
      >
        {calc && <span className={`font-semibold leading-none ${abc ? "text-[7px]" : "text-[8px]"}`}>=</span>}
        {abc && <span className="text-[9px] leading-none font-semibold">Abc</span>}
        {icon === "hash" && <Hash />}
        {icon === "geo" && <Globe />}
        {icon === "cal" && <Calendar />}
      </div>
      <span className={`whitespace-nowrap text-[#333] ${italic ? "pl-[1px] tracking-[0.35px] italic" : ""}`}>
        {name}
      </span>
    </div>
  );
}

function TableHead({ name }) {
  return (
    <div className="flex h-5 items-center pl-[6px]">
      <Chevron />
      <span className="ml-2 flex w-[23px]">
        <TableIcon />
      </span>
      <span className="font-semibold text-black">{name}</span>
    </div>
  );
}

const TRIP_DIMS = [
  ["hash", "Bike Id"],
  ["hash", "Birthyear"],
  ["cal", "End Time"],
  ["hash", "From Station Id"],
  ["abc", "From Station Name"],
  ["abc", "Gender"],
  ["cal", "Start Time"],
  ["abc", "Time Block", true],
  ["hash", "To Station Id"],
  ["abc", "To Station Name"],
  ["hash", "Trip Id"],
  ["abc", "Usertype"],
  ["abc", "Weekday or Weekend", true],
];

function Sidebar() {
  return (
    <aside className="flex w-[208px] shrink-0 flex-col border-r border-[#d0d3d1] bg-white pt-px">
      <div className="flex h-[27px] shrink-0 text-[13.5px]">
        <div className="flex w-[75px] items-center border-t border-[#d4d4d4] pb-px pl-4 font-semibold text-black">
          Data
        </div>
        <div className="flex flex-1 items-center justify-between border-t border-b border-l border-[#d4d4d4] pr-2 pl-3 text-[#333]">
          <span>Analytics</span>
          <svg width="6" height="10" viewBox="0 0 6 10" fill="none" stroke="#555" strokeWidth="1.1">
            <path d="M5.2 .8L1 5l4.2 4.2" />
          </svg>
        </div>
      </div>
      <div className="flex h-[30px] shrink-0 items-center border-b border-[#e2e2e2] pb-px pl-[17px] text-[#555]">
        <svg width="18" height="18" viewBox="0 0 18 18" fill="none" stroke="#666" strokeWidth="1">
          <path d="M1 3v8c0 1.3 1.5 2 3.5 2.3M1 3c0-1.2 2-2 5-2s5 .8 5 2M1 3c0 1 1 1.6 2.5 1.9" />
          <path d="M4.5 6.5v7c0 1.2 1.8 2 4 2.2M4.5 6.5c0-1.2 2-2 4.7-2s4.6.8 4.6 2v2M4.500 6.500c0 1.200 2 2 4.700 2s4.600-.8 4.600-2M6.500 11h4M8.500 9l2 2-2 2" />
          <circle cx="13.5" cy="13.2" r="3.7" fill="#2e7f9f" stroke="none" />
          <path d="M11.8 13.2l1.3 1.3 2.2-2.4" stroke="white" />
        </svg>
        <span className="ml-[5px]">Divvy Data</span>
      </div>
      <div className="mt-2 flex h-[23px] shrink-0 items-center pl-[6px]">
        <div className="flex h-[23px] w-[130px] items-center justify-between rounded-[2px] border border-[#c4c4c4] pr-[7px] pl-[6px] text-[#a3a3a3]">
          <span>Search</span>
          <svg width="9" height="10" viewBox="0 0 9 10" fill="none" stroke="#555" strokeWidth="1.1">
            <circle cx="5.2" cy="3.6" r="3" />
            <path d="M3.2 6L.4 9.3" />
          </svg>
        </div>
        <svg className="ml-1" width="13" height="13" viewBox="0 0 13 13" fill="none" stroke="#555" strokeWidth="1">
          <path d="M.7 1h11.6L8 6.500v5.300H5V6.500z" />
        </svg>
        <div className="ml-[6px] h-[18px] w-px bg-[#d4d4d4]" />
        <svg className="ml-[6px]" width="12" height="10" viewBox="0 0 12 10" stroke="#555" strokeWidth="1">
          <path d="M0 .5h12M0 2.5h12M0 4.5h12M0 6.5h12M0 8.5h12" strokeDasharray="3 0.500 2 0.500 3 0.500 3 0" />
        </svg>
        <span className="ml-[9px]">
          <Caret />
        </span>
      </div>
      <div className="mt-px flex h-[29px] shrink-0 items-center pl-4 text-[12.5px] font-semibold tracking-[0.2px] text-black">
        Tables
      </div>
      <TableHead name="Stations" />
      <Field icon="hash" name="Id" />
      <Field icon="geo" name="Latitude" measure />
      <Field icon="geo" name="Longitude" measure />
      <Field icon="abc" name="Name" />
      <div className="mt-px mr-[6px] ml-7 h-px shrink-0 bg-[#e2e2e2]" />
      <Field icon="hash" name="Docks" measure />
      <Field icon="hash" name="Stations (Count)" measure italic />
      <div className="mt-[10px]">
        <TableHead name="Trips" />
      </div>
      {TRIP_DIMS.map(([icon, name, calc]) => (
        <Field key={name} icon={icon} name={name} calc={calc} />
      ))}
      <div className="mt-px mr-[6px] ml-7 h-px shrink-0 bg-[#e2e2e2]" />
      <Field icon="hash" name="Tripduration" measure />
      <Field icon="hash" name="Tripduration (hour)" measure calc />
      <Field icon="hash" name="Tripduration (minutes)" measure calc />
      <Field icon="hash" name="Trips (Count)" measure italic />
      <div className="mt-[9px]">
        <Field icon="abc" name="Measure Names" italic root />
      </div>
      <div className="mt-px mr-[6px] ml-[13px] h-px shrink-0 bg-[#e2e2e2]" />
      <Field icon="hash" name="Measure Values" measure italic root />
    </aside>
  );
}

/* ---------- cards ---------- */

const CARD = "border border-[#d3d8d5] bg-white";

function MarkButton({ icon, label, narrow }) {
  return (
    <div
      className={`flex h-[42px] flex-col items-center border border-[#d4d6d5] ${narrow ? "w-[42px]" : "w-[43px]"}`}
    >
      <div className="flex h-[27px] items-center pt-px">{icon}</div>
      <span className="text-[9.5px] leading-[12px] text-[#444]">{label}</span>
    </div>
  );
}

function MarkPill({ icon, children, blue }) {
  return (
    <div className="flex h-5 items-center">
      <div className="flex w-[25px] items-center pl-[7px]">{icon}</div>
      <div
        className={`flex h-5 w-[111px] items-center rounded-full pl-[10px] font-medium tracking-[0.3px] whitespace-nowrap text-white ${
          blue ? "bg-[#4e97b3]" : "bg-[#1fb587]"
        }`}
      >
        {children}
      </div>
    </div>
  );
}

function Cards() {
  return (
    <div className="flex w-[154px] shrink-0 flex-col gap-[6px] text-[#4a4a4a]">
      <div className={`${CARD} h-[62px] pt-[6px] pl-[6px] leading-[17px]`}>Pages</div>
      <div className={`${CARD} h-[78px] pt-[6px] pl-1`}>
        <div className="pl-[2px] leading-[17px]">Filters</div>
        <div className="mt-[9px] flex h-5 w-[144px] items-center justify-between rounded-full bg-[#4e97b3] pr-3 pl-[10px] font-medium text-white">
          <span>Gender: Null</span>
          <SortIcon />
        </div>
      </div>
      <div className={`${CARD} h-[264px] pt-[6px] pl-[6px]`}>
        <div className="leading-[17px]">Marks</div>
        <div className="mt-3 flex h-[21px] w-[140px] items-center rounded-[2px] border border-[#c9cbca]">
          <svg className="ml-3" width="11" height="11" viewBox="0 0 11 11" fill="none" stroke="#999" strokeWidth="1.2">
            <circle cx="5.5" cy="5.5" r="4.4" />
          </svg>
          <span className="ml-[6px] flex-1 text-[11.5px]">Circle</span>
          <div className="flex h-full w-[18px] items-center justify-center border-l border-[#dcdcdc]">
            <Caret />
          </div>
        </div>
        <div className="mt-[6px] flex gap-[6px]">
          <MarkButton icon={<ColorDots />} label="Color" />
          <MarkButton icon={<SizeIcon />} label="Size" narrow />
          <MarkButton icon={<LabelIcon />} label="Label" />
        </div>
        <div className="mt-[6px] flex gap-[6px]">
          <MarkButton icon={<DetailIcon />} label="Detail" />
          <MarkButton icon={<TooltipIcon />} label="Tooltip" narrow />
        </div>
        <div className="mt-[9px] flex flex-col gap-[3px]">
          <MarkPill icon={<ColorDots />} blue>
            <span className="w-[79px]">WEEKDAY(..</span>
            <SortIcon />
          </MarkPill>
          <MarkPill icon={<SizeIcon />}>CNT(Trips)</MarkPill>
          <MarkPill icon={<LabelIcon />}>
            <svg className="mr-[6px] ml-[2px]" width="9" height="9" viewBox="0 0 9 9" fill="none" stroke="white" strokeWidth="1">
              <path d="M.5 .5h8v8h-8zM2 4.5h5M4.5 2v5" />
            </svg>
            HOUR(Star..
          </MarkPill>
        </div>
      </div>
    </div>
  );
}

function Shelf({ icon, label, children }) {
  return (
    <div className={`${CARD} flex h-7 shrink-0`}>
      <div className="flex w-[125px] items-center gap-[7px] border-r border-[#d3d8d5] pl-[6px] text-[#4a4a4a]">
        {icon}
        <span>{label}</span>
      </div>
      <div className="flex items-center pl-[2px]">{children}</div>
    </div>
  );
}

const LEGEND = [
  ["Monday", "bg-[#f8923b]"],
  ["Tuesday", "bg-[#e5565c]"],
  ["Wednesday", "bg-[#77b8b3]"],
  ["Thursday", "bg-[#5ba551]"],
  ["Friday", "bg-[#eecf5b]"],
  ["Saturday", "bg-[#b47aa2]"],
  ["Sunday", "bg-[#4c79a5]"],
];

function Legend() {
  return (
    <div className={`${CARD} h-[172px] w-[154px] shrink-0 text-[#4a4a4a]`}>
      <div className="pt-[6px] pl-[6px] leading-[17px] tracking-[0.25px] whitespace-nowrap">WEEKDAY(Start Time)</div>
      <div className="mt-2 pl-[3px]">
        {LEGEND.map(([day, bg]) => (
          <div key={day} className="flex h-5 items-start">
            <div className={`h-[14px] w-[14px] ${bg}`} />
            <span className="ml-[5px] text-[12.3px] leading-[17px]">{day}</span>
          </div>
        ))}
      </div>
    </div>
  );
}

function View() {
  return (
    <div className={`${CARD} w-[1230px] shrink-0 border-b-0 pl-[9px]`}>
      <h1 className="pt-[11px] pl-px text-[20px] leading-[28px] font-light tracking-[0.1px] text-[#333]">
        Trend by Day and Gender
      </h1>
      <div className="mt-[9px] w-[1151px] text-center leading-[20px] text-[#222]">Gender</div>
      <div className="flex h-5 w-[1151px] border-b border-[#cfcfcf] pt-px leading-[18px] text-[#777]">
        <div className="w-[575px] text-center">Male</div>
        <div className="w-[576px] text-center">Female</div>
      </div>
      <div className="w-[1151px] border-b border-[#cfcfcf]">
        <Bubbles />
      </div>
    </div>
  );
}

export default function App() {
  return (
    <div className="relative flex h-[736px] w-[1774px] overflow-hidden border-r-4 border-[#f5f6fb] bg-[#f6fbf8] font-['Noto_Sans',sans-serif] text-[12px] leading-[16px]">
      <Sidebar />
      <div className="flex gap-[6px] pt-px pl-[6px]">
        <Cards />
        <main className="flex w-[1390px] flex-col gap-[6px]">
          <Shelf
            label="Columns"
            icon={
              <svg width="12" height="12" viewBox="0 0 12 12" fill="#666">
                <path d="M1 0h2v2H1zM5 0h2v2H5zM9 0h2v2H9zM1 3h2v9H1zM5 3h2v9H5zM9 3h2v9H9z" />
              </svg>
            }
          >
            <div className="flex h-5 w-[148px] items-center justify-between rounded-full bg-[#4e97b3] pr-3 pl-[10px] font-medium text-white">
              <span>Gender</span>
              <SortIcon />
            </div>
          </Shelf>
          <Shelf
            label="Rows"
            icon={
              <svg width="12" height="10" viewBox="0 0 12 10" fill="#666">
                <path d="M0 0h2v2H0zM0 4h2v2H0zM0 8h2v2H0zM3 0h9v2H3zM3 4h9v2H3zM3 8h9v2H3z" />
              </svg>
            }
          />
          <div className="flex h-[667px] shrink-0 items-stretch justify-between">
            <View />
            <Legend />
          </div>
        </main>
      </div>
      <svg className="absolute top-[432px] left-[1721px] drop-shadow-md" width="14" height="21" viewBox="0 0 14 21">
        <path
          d="M1.5 1.5v16l3.7-3.5 2.4 5.4 2.3-1-2.4-5.300h5.100z"
          fill="white"
          stroke="#1b1b2b"
          strokeWidth="1"
        />
      </svg>
    </div>
  );
}
